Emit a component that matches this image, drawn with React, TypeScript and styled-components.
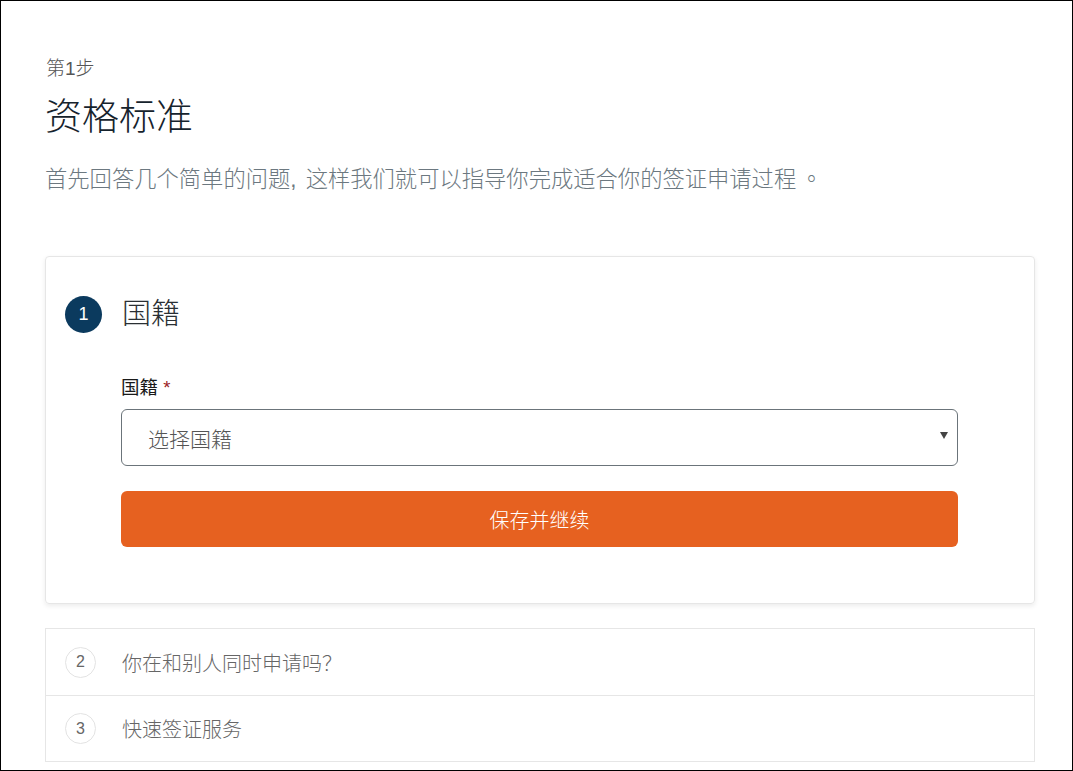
import styled, { createGlobalStyle } from "styled-components";

const GlobalStyle = createGlobalStyle`
	* {
		box-sizing: border-box;
	}
	body {
		margin: 0;
		background: #fff;
		font-family: "Liberation Sans", "Noto Sans CJK SC", sans-serif;
	}
`;

const steps = [
	{ n: 2, title: "你在和别人同时申请吗？" },
	{ n: 3, title: "快速签证服务" },
];

export default function App() {
	return (
		<>
			<GlobalStyle />
			<Frame>
				<StepLabel>第1步</StepLabel>
				<Title>资格标准</Title>
				<Intro>
					首先回答几个简单的问题<Comma>, </Comma>这样我们就可以指导你完成适合你的签证申请过程<Stop>。</Stop>
				</Intro>

				<Card>
					<CardHeader>
						<StepBadge $active>1</StepBadge>
						<CardTitle>国籍</CardTitle>
					</CardHeader>
					<Form>
						<FieldLabel>
							国籍 <Required>*</Required>
						</FieldLabel>
						<SelectBox>
							<Placeholder>选择国籍</Placeholder>
							<Caret />
						</SelectBox>
						<PrimaryButton>保存并继续</PrimaryButton>
					</Form>
				</Card>

				<StepList>
					{steps.map((s) => (
						<StepRow key={s.n}>
							<StepBadge>{s.n}</StepBadge>
							<StepTitle>{s.title}</StepTitle>
						</StepRow>
					))}
				</StepList>
			</Frame>
		</>
	);
}

const Frame = styled.div`
	width: 1073px;
	height: 771px;
	overflow: hidden;
	border: 1px solid #000;
	padding: 56px 37px 0 44px;
`;

const StepLabel = styled.div`
	font-size: 19px;
	line-height: 24px;
	font-weight: 300;
	color: #555;
	padding-left: 1px;
`;

const Title = styled.h1`
	margin: 13px 0 0;
	font-size: 37px;
	line-height: 48px;
	font-weight: 300;
	color: #16232d;
`;

const Intro = styled.p`
	margin: 22px 0 0;
	height: 32px;
	font-size: 22.3px;
	line-height: 32px;
	font-weight: 300;
	color: #6c7880;
	white-space: nowrap;
`;

const Comma = styled.span`
	margin-right: 3px;
`;

const Stop = styled.span`
	font-family: "Noto Sans CJK TC", sans-serif;
	line-height: 1;
	margin-left: 4px;
`;

const Card = styled.section`
	margin-top: 60px;
	width: 990px;
	border: 1px solid #e6e6e6;
	border-radius: 4px;
	box-shadow: 0 2px 5px rgba(0, 0, 0, 0.08);
	padding: 39px 0 56px 19px;
`;

const CardHeader = styled.div`
	display: flex;
	align-items: center;
	gap: 20px;
`;

const StepBadge = styled.span<{ $active?: boolean }>`
	flex: none;
	display: flex;
	align-items: center;
	justify-content: center;
	width: ${(p) => (p.$active ? "37px" : "31px")};
	height: ${(p) => (p.$active ? "37px" : "31px")};
	border-radius: 50%;
	font-size: ${(p) => (p.$active ? "18px" : "16px")};
	background: ${(p) => (p.$active ? "#0b3a5e" : "#fff")};
	color: ${(p) => (p.$active ? "#fff" : "#666")};
	border: ${(p) => (p.$active ? "none" : "1px solid #e3e3e3")};
`;

const CardTitle = styled.h2`
	margin: 0;
	font-size: 29px;
	line-height: 37px;
	font-weight: 300;
	color: #2a2f33;
`;

const Form = styled.div`
	margin: 43px 0 0 56px;
	width: 837px;
	display: flex;
	flex-direction: column;
`;

const FieldLabel = styled.label`
	font-size: 18.5px;
	line-height: 24px;
	color: #1a1a1a;
`;

const Required = styled.span`
	color: #9b2226;
`;

const SelectBox = styled.div`
	margin-top: 9px;
	height: 57px;
	display: flex;
	align-items: center;
	justify-content: space-between;
	padding: 0 9px 0 26px;
	border: 1px solid #6b747a;
	border-radius: 6px;
	background: #fff;
`;

const Placeholder = styled.span`
	font-size: 21px;
	font-weight: 300;
	color: #555;
`;

const Caret = styled.span`
	width: 0;
	height: 0;
	margin-top: -4px;
	border-left: 4px solid transparent;
	border-right: 4px solid transparent;
	border-top: 7px solid #444;
`;

const PrimaryButton = styled.button`
	margin-top: 25px;
	height: 56px;
	border: none;
	border-radius: 6px;
	background: #e66120;
	color: #fff;
	font-family: inherit;
	font-size: 20px;
	font-weight: 300;
	cursor: pointer;
`;

const StepList = styled.div`
	margin-top: 24px;
	width: 990px;
	border: 1px solid #e6e6e6;
`;

const StepRow = styled.div`
	height: 66px;
	display: flex;
	align-items: center;
	gap: 26px;
	padding-left: 19px;

	& + & {
		border-top: 1px solid #e6e6e6;
	}
`;

const StepTitle = styled.span`
	font-size: 20px;
	font-weight: 300;
	color: #666;
`;
